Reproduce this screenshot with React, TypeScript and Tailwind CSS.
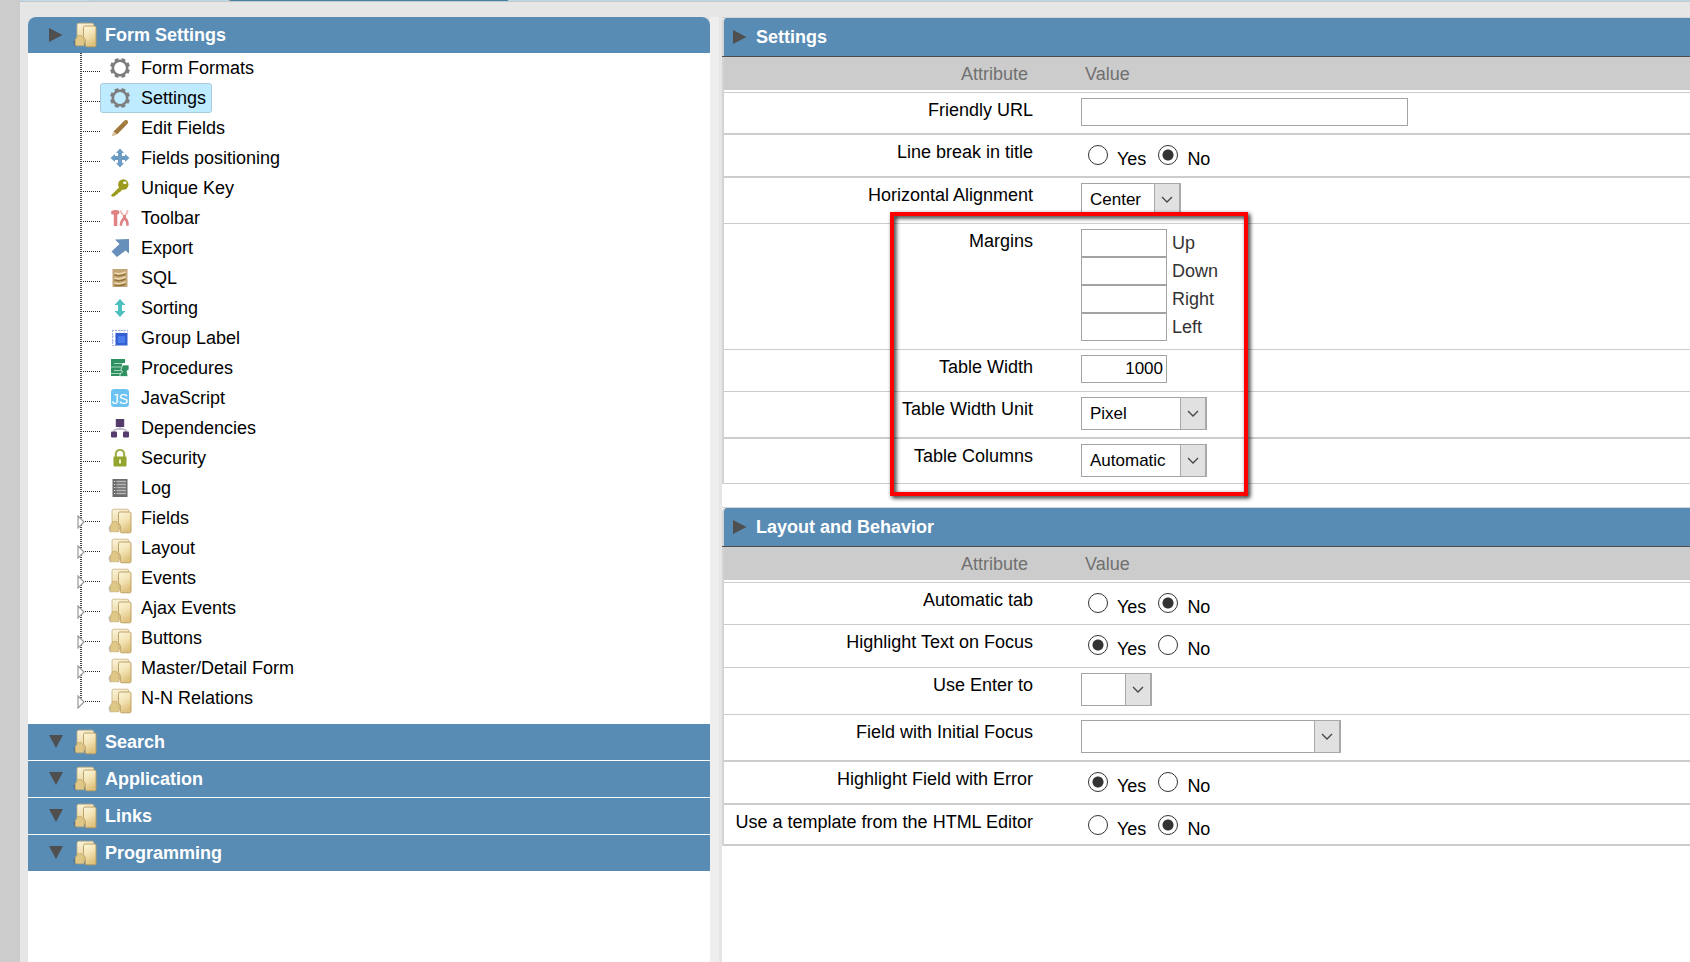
import React, { useState } from 'react';

type IconName =
  | 'gear' | 'pencil' | 'move' | 'key' | 'tools' | 'export' | 'sql' | 'sort'
  | 'group' | 'proc' | 'js' | 'deps' | 'lock' | 'log' | 'folder';

const treeItems: { label: string; icon: IconName }[] = [
  { label: 'Form Formats', icon: 'gear' },
  { label: 'Settings', icon: 'gear' },
  { label: 'Edit Fields', icon: 'pencil' },
  { label: 'Fields positioning', icon: 'move' },
  { label: 'Unique Key', icon: 'key' },
  { label: 'Toolbar', icon: 'tools' },
  { label: 'Export', icon: 'export' },
  { label: 'SQL', icon: 'sql' },
  { label: 'Sorting', icon: 'sort' },
  { label: 'Group Label', icon: 'group' },
  { label: 'Procedures', icon: 'proc' },
  { label: 'JavaScript', icon: 'js' },
  { label: 'Dependencies', icon: 'deps' },
  { label: 'Security', icon: 'lock' },
  { label: 'Log', icon: 'log' },
  { label: 'Fields', icon: 'folder' },
  { label: 'Layout', icon: 'folder' },
  { label: 'Events', icon: 'folder' },
  { label: 'Ajax Events', icon: 'folder' },
  { label: 'Buttons', icon: 'folder' },
  { label: 'Master/Detail Form', icon: 'folder' },
  { label: 'N-N Relations', icon: 'folder' },
];

const FolderIcon = () => (
  <svg viewBox="0 0 24 26" className="w-6 h-[26px] shrink-0" aria-hidden="true">
    <defs>
      <linearGradient id="folderBack" x1="0" y1="0" x2="0.3" y2="1">
        <stop offset="0" stopColor="#fbf5dc" />
        <stop offset="1" stopColor="#e6d096" />
      </linearGradient>
      <linearGradient id="folderFront" x1="0" y1="0" x2="0.4" y2="1">
        <stop offset="0" stopColor="#fcf6da" />
        <stop offset="0.5" stopColor="#f3e4b6" />
        <stop offset="1" stopColor="#dfc27e" />
      </linearGradient>
    </defs>
    <path d="M.500 19.500Q1 18 3 17V25Q.500 23.500 .500 19.500z" fill="#000" opacity="0.22" />
    <path d="M4 3Q4 1.200 5.800 1.200H19Q20.800 1.200 20.800 3V21H4z" fill="url(#folderBack)" stroke="#c6b080" strokeWidth="0.8" />
    <path d="M2.200 18Q2.200 16.500 3.800 16L4.500 13.500H8.500L9.500 16Q11 16.500 11 18V23.800H3.500Q2.200 23.800 2.200 22.500z" fill="#dfc788" stroke="#c3a564" strokeWidth="0.6" />
    <path d="M10.500 5.500Q10.500 4 12 4H21.500Q23 4 23 5.500V23.300Q23 24.800 21.500 24.800H13.800Q12.300 24.800 12.300 23.300V17.500L10.500 15z" fill="url(#folderFront)" stroke="#b79a5c" strokeWidth="0.9" />
  </svg>
);

const shapes: Record<Exclude<IconName, 'folder'>, React.ReactNode> = {
  gear: (
    <g stroke="#7d7d7d" fill="none">
      <circle cx="10" cy="10" r="7.200" strokeWidth="2.600" />
      <path d="M7 2.800L6.200 .800M13 2.800L13.800 .800M17.200 7L19.200 6.200M17.200 13L19.200 13.800M13 17.200L13.800 19.200M7 17.200L6.200 19.200M2.800 13L.800 13.800M2.800 7L.800 6.200" strokeWidth="4" />
    </g>
  ),
  pencil: (
    <g>
      <path d="M3.500 13.500L14 3Q15.500 1.500 17.500 2.500Q18.700 4.500 17.300 6L7 16.500z" fill="#a0783c" />
      <path d="M3.500 13.500L7 16.500L1.500 18.500z" fill="#d9bf96" />
      <path d="M13.500 3.500L17 7" stroke="#c49a5c" strokeWidth="0.8" />
    </g>
  ),
  move: (
    <path d="M10 .500L14 5H12V8H15V6L19.500 10L15 14V12H12V15H14L10 19.500L6 15H8V12H5V14L.500 10L5 6V8H8V5H6z" fill="#6c9bc4" />
  ),
  key: (
    <g>
      <path d="M10.500 8L1 17.200L2.200 18.800L5 18.300L6 16.800L7.700 16.300L8.200 14.700L9.800 14.200L13 11z" fill="#9b9b1e" />
      <circle cx="13.300" cy="6.500" r="5.200" fill="#9b9b1e" />
      <ellipse cx="14.800" cy="4.800" rx="1.800" ry="1.300" fill="#fff" />
    </g>
  ),
  tools: (
    <g fill="#e08284">
      <path d="M1 3.500Q4 1.500 8 2.200Q9.500 2.700 9.500 4.500L8.500 6.500H7.300V18H3.800V6.500H1.500z" />
      <path d="M10.800 2.500Q11 6 13.500 7M17.500 2Q17.500 6 15 7" stroke="#efb9b9" strokeWidth="1.800" fill="none" />
      <path d="M13 7H16L16 9.500Q19 12 18.800 17.500L16.300 18Q16.300 13.500 14.500 12Q12.500 13.500 12 18L9.500 17.500Q10 12 13 9.500z" />
    </g>
  ),
  export: (
    <path d="M5 1.500L19 1V15.500L15.500 12.500L7 19L1.500 13.500L9.500 6z" fill="#668fba" />
  ),
  sql: (
    <g>
      <rect x="2.500" y="1" width="15" height="18" fill="#c2a676" />
      <path d="M4.500 5Q10 7 15.500 4M4.500 10Q10 12 15.500 9M4.500 15Q10 17 15.500 14" stroke="#ecdab0" strokeWidth="1.800" fill="none" />
      <path d="M4.500 7Q10 8.800 15.500 6M4.500 12Q10 13.800 15.500 11M4.500 17Q10 18.500 15.500 16" stroke="#93733c" strokeWidth="1.500" fill="none" />
    </g>
  ),
  sort: (
    <path d="M10 1L15.500 7H12V13H15.500L10 19L4.500 13H8V7H4.500z" fill="#4cc0bc" />
  ),
  group: (
    <g>
      <path d="M2.500 2V18M2 2.500H18M2 8H6M2 13H6M2 17.500H6M6 1.500V5M10 1.500V5M14 1.500V5M17.500 1.500V5" stroke="#a3b6e2" strokeWidth="1" strokeDasharray="2 1" />
      <rect x="5.500" y="5" width="12" height="12.500" fill="#3460d4" />
      <rect x="8" y="8" width="7" height="7" fill="#4a7cec" />
    </g>
  ),
  proc: (
    <g>
      <path d="M1 1H15V5H12V18H1z" fill="#2f9160" />
      <path d="M4 5.500H13M1 9H11M4 12.500H11M1 15.500H11" stroke="#b5dcc6" strokeWidth="0.9" />
      <path d="M12.500 7H19V11.500L17 13L18 18.500H10V16L12.500 14L11 11.500z" fill="#2f9160" stroke="#fff" strokeWidth="0.7" />
    </g>
  ),
  js: (
    <g>
      <rect x="1" y="1" width="18" height="18" rx="3" fill="#6cc3f2" />
      <text x="10" y="15.500" textAnchor="middle" fill="#fff" fontSize="14" fontFamily="Liberation Sans, sans-serif">JS</text>
    </g>
  ),
  deps: (
    <g>
      <path d="M10 8V11M4 15V12.500L7 11H13L16 12.500V15" stroke="#b9adc4" strokeWidth="1.300" fill="none" />
      <rect x="5.800" y="1" width="8.400" height="8" fill="#563c6c" />
      <rect x="1" y="13.500" width="6" height="6" rx="1" fill="#563c6c" />
      <rect x="13" y="13.500" width="6" height="6" rx="1" fill="#563c6c" />
    </g>
  ),
  lock: (
    <g>
      <path d="M5.800 9V6.500Q5.800 2 10 2Q14.200 2 14.200 6.500V9" stroke="#a3b04a" strokeWidth="2.200" fill="none" />
      <rect x="3.500" y="8.500" width="13" height="10" rx="1" fill="#93a52f" />
      <path d="M10 11.500V15.500" stroke="#eef2d0" strokeWidth="2" />
    </g>
  ),
  log: (
    <g>
      <rect x="2.500" y="1" width="15" height="18" fill="#6c6c6c" />
      <path d="M6.500 3.500H16M6.500 6.500H16M6.500 9.500H16M6.500 12.500H16M6.500 15.500H16" stroke="#b8b8b8" strokeWidth="1.300" />
      <path d="M4 3.500H5.300M4 6.500H5.300M4 9.500H5.300M4 12.500H5.300M4 15.500H5.300" stroke="#ddd" strokeWidth="1" />
    </g>
  ),
};

const TreeIcon = ({ name }: { name: IconName }) => {
  if (name === 'folder') {
    return <span className="pt-1.5 -mx-0.5"><FolderIcon /></span>;
  }
  return (
    <svg viewBox="0 0 20 20" className="w-5 h-5 shrink-0" aria-hidden="true">
      {shapes[name]}
    </svg>
  );
};

const Triangle = ({ down = false }: { down?: boolean }) => (
  <svg viewBox="0 0 14 14" className="w-3.5 h-3.5 shrink-0" aria-hidden="true">
    <path d={down ? 'M0 0H14L7 13z' : 'M0 0L13.500 7L0 14z'} fill="#4f4f4f" />
  </svg>
);

const SidebarHeader = ({ label, open = false }: { label: string; open?: boolean }) => (
  <button
    type="button"
    className={`flex items-center w-full h-9 pl-[21px] bg-[#598cb5] text-white font-bold text-left ${open ? 'rounded-t-lg' : ''}`}
  >
    <Triangle down={!open} />
    <span className="ml-2.5 mr-2"><FolderIcon /></span>
    {label}
  </button>
);

const Tree = () => {
  const [selected, setSelected] = useState('Settings');

  return (
    <ul className="pb-[11px]">
      {treeItems.map((item, i) => (
        <li key={item.label} className="flex h-[30px] pl-[49px]">
          <div className="relative w-[23px] shrink-0">
            <div
              className={`absolute left-[3px] top-0 w-0.5 bg-[repeating-linear-gradient(#444_0_1px,transparent_1px_2px)] ${
                i === treeItems.length - 1 ? 'h-[18px]' : 'h-full'
              }`}
            />
            <div className="absolute left-1.5 right-0 top-[18px] h-px bg-[repeating-linear-gradient(90deg,#222_0_1px,transparent_1px_2px)]" />
            {item.icon === 'folder' && (
              <svg viewBox="0 0 8 14" className="absolute left-0 top-3 w-2 h-3.5" aria-hidden="true">
                <path d="M1 1L7 7L1 13z" fill="#fff" stroke="#999" strokeWidth="1.200" />
              </svg>
            )}
          </div>
          <a
            href="#"
            onClick={() => setSelected(item.label)}
            className={`flex items-center gap-[11px] border rounded-[3px] pl-[9px] pr-[5px] text-black ${
              selected === item.label ? 'bg-[#beebff] border-[#a9cbdb]' : 'border-transparent'
            }`}
          >
            <TreeIcon name={item.icon} />
            {item.label}
          </a>
        </li>
      ))}
    </ul>
  );
};

interface RowProps {
  label: string;
  height: string;
  htmlFor?: string;
  thick?: boolean;
  children: React.ReactNode;
}

const Row = ({ label, height, htmlFor, thick, children }: RowProps) => {
  const border = thick ? 'border-b-2' : 'border-b';
  return (
    <tr className={height}>
      <th scope="row" className={`${border} border-[#cccccc] font-normal text-right align-top pt-[7px] pr-[3px]`}>
        <label htmlFor={htmlFor}>{label}</label>
      </th>
      <td className={`${border} border-[#cccccc] align-top pt-[5px] pl-[45px]`}>{children}</td>
    </tr>
  );
};

const YesNo = ({ name, value }: { name: string; value: 'Yes' | 'No' }) => (
  <div className="flex items-baseline gap-3 pl-[7px] pt-[5px]">
    {['Yes', 'No'].map((option) => (
      <label key={option} className="flex items-baseline gap-[9px]">
        <input
          type="radio"
          name={name}
          defaultChecked={option === value}
          className="appearance-none w-5 h-5 rounded-full border border-[#333] bg-white checked:bg-[radial-gradient(circle,#333_5px,transparent_6px)]"
        />
        {option}
      </label>
    ))}
  </div>
);

const SelectBox = ({ id, width, options }: { id: string; width: string; options: string[] }) => (
  <div className={`relative h-[33px] ${width}`}>
    <select id={id} className="appearance-none block w-full h-full border border-[#a3a3a3] bg-white pl-2 text-[17px]">
      {options.map((o) => (
        <option key={o}>{o}</option>
      ))}
    </select>
    <span className="absolute right-0 inset-y-0 w-[27px] flex items-center justify-center bg-[#e1e1e1] border border-r-2 border-[#a8a8a8] pointer-events-none">
      <svg viewBox="0 0 12 8" className="w-3 h-2" aria-hidden="true">
        <path d="M1 1L6 6L11 1" fill="none" stroke="#444" strokeWidth="1.300" />
      </svg>
    </span>
  </div>
);

const inputClass = 'block h-7 border border-[#a3a3a3] bg-white px-[3px] text-[17px]';

const Section = ({ title, children }: { title: string; children: React.ReactNode }) => (
  <section className="border-t border-[#d4d4d4]">
    <div className="border-b border-[#4d4d4d]">
      <button
        type="button"
        className="flex items-center gap-[9px] w-full h-[38px] pl-[9px] border-l-2 border-[#d4d4d4] bg-[#598cb5] bg-clip-padding text-white font-bold rounded-tl-sm"
      >
        <Triangle />
        {title}
      </button>
    </div>
    <table className="w-full table-fixed border-separate border-spacing-0 border-l-2 border-[#d4d4d4]">
      <colgroup>
        <col className="w-[312px]" />
        <col />
      </colgroup>
      <thead>
        <tr className="text-[#707070]">
          <th className="p-0 pb-0.5 border-b border-[#cccccc] font-normal text-right">
            <div className="h-[33px] bg-[#cccccc] pr-2 pt-[7px]">Attribute</div>
          </th>
          <th className="p-0 pb-0.5 border-b border-[#cccccc] font-normal text-left">
            <div className="h-[33px] bg-[#cccccc] pl-[49px] pt-[7px]">Value</div>
          </th>
        </tr>
      </thead>
      <tbody>{children}</tbody>
    </table>
  </section>
);

export default function App() {
  return (
    <div className="flex min-h-screen bg-[#e6e6e6] font-['Liberation_Sans',Arial,sans-serif] text-[18px] leading-5 text-black">
      <div className="w-5 shrink-0 bg-[#cccccc]" />
      <div className="flex flex-col flex-1 min-w-0">
        <div className="flex h-0.5 bg-[#bcd7e6] border-b border-[#c4c8ca]">
          <div className="w-[69px] border-x border-[#c4c8ca] bg-[#c3dcec]" />
          <div className="w-[141px] border-r-2 border-[#b5b5b5]" />
          <div className="w-[278px] bg-[#4682a4]" />
        </div>
        <div className="grid grid-cols-[682fr_12px_968fr] flex-1 pt-[15px] pl-2">
          <nav className="bg-white rounded-t-lg">
            <SidebarHeader label="Form Settings" open />
            <Tree />
            <div className="flex flex-col gap-px">
              <SidebarHeader label="Search" />
              <SidebarHeader label="Application" />
              <SidebarHeader label="Links" />
              <SidebarHeader label="Programming" />
            </div>
          </nav>
          <div className="mr-[3px] bg-[#eeeeee]" />
          <main className="relative flex flex-col gap-[23px] bg-white rounded-tl-md">
            <Section title="Settings">
              <Row label="Friendly URL" htmlFor="friendly-url" height="h-[42px]" thick>
                <input id="friendly-url" type="text" className={`${inputClass} w-[327px]`} />
              </Row>
              <Row label="Line break in title" height="h-[43px]" thick>
                <YesNo name="line-break" value="No" />
              </Row>
              <Row label="Horizontal Alignment" htmlFor="h-align" height="h-[46px]">
                <SelectBox id="h-align" width="w-[100px]" options={['Center', 'Left', 'Right']} />
              </Row>
              <Row label="Margins" height="h-[126px]">
                {['Up', 'Down', 'Right', 'Left'].map((side) => (
                  <label key={side} className="flex items-center gap-[5px] text-[#333]">
                    <input type="text" className={`${inputClass} w-[86px]`} />
                    {side}
                  </label>
                ))}
              </Row>
              <Row label="Table Width" htmlFor="table-width" height="h-[42px]">
                <input id="table-width" type="text" defaultValue="1000" className={`${inputClass} w-[86px] text-right`} />
              </Row>
              <Row label="Table Width Unit" htmlFor="width-unit" height="h-[47px]" thick>
                <SelectBox id="width-unit" width="w-[126px]" options={['Pixel', 'Percent', 'Automatic']} />
              </Row>
              <Row label="Table Columns" htmlFor="table-columns" height="h-[45px]">
                <SelectBox id="table-columns" width="w-[126px]" options={['Automatic', 'Inform']} />
              </Row>
            </Section>

            <Section title="Layout and Behavior">
              <Row label="Automatic tab" height="h-[42px]">
                <YesNo name="auto-tab" value="No" />
              </Row>
              <Row label="Highlight Text on Focus" height="h-[43px]">
                <YesNo name="highlight-text" value="Yes" />
              </Row>
              <Row label="Use Enter to" htmlFor="use-enter" height="h-[47px]">
                <SelectBox id="use-enter" width="w-[71px]" options={['', 'Tab', 'Submit']} />
              </Row>
              <Row label="Field with Initial Focus" htmlFor="initial-focus" height="h-[47px]" thick>
                <SelectBox id="initial-focus" width="w-[260px]" options={['']} />
              </Row>
              <Row label="Highlight Field with Error" height="h-[43px]" thick>
                <YesNo name="highlight-error" value="Yes" />
              </Row>
              <Row label="Use a template from the HTML Editor" height="h-[41px]" thick>
                <YesNo name="html-template" value="No" />
              </Row>
            </Section>

            {/* Callout around the margin and width options */}
            <div className="absolute left-[168px] top-[195px] w-[358px] h-[284px] border-4 border-[#ff0000] drop-shadow-[2px_2px_2px_rgba(0,0,0,0.9)] pointer-events-none" />
          </main>
        </div>
      </div>
    </div>
  );
}
